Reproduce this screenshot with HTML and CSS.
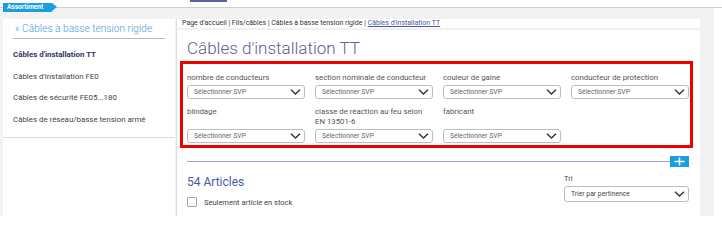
FILE: index.html
```html
<!DOCTYPE html>
<html lang="fr">
<head>
    <meta charset="UTF-8">
    <meta name="viewport" content="width=device-width, initial-scale=1.0">
    <title>Câbles d'installation TT</title>
    <link rel="stylesheet" href="styles.css">
</head>
<body>
    <header class="topbar">
        <span class="badge">Assortiment</span>
        <nav class="tabs">
            <span class="tab active"></span>
        </nav>
    </header>

    <div class="page">
        <aside class="sidebar">
            <a class="sidebar-back" href="#">« Câbles à basse tension rigide</a>
            <ul class="sidebar-nav">
                <li class="active">Câbles d'installation TT</li>
                <li>Câbles d'installation FE0</li>
                <li>Câbles de sécurité FE05...180</li>
                <li>Câbles de réseau/basse tension armé</li>
            </ul>
        </aside>

        <main class="content">
            <div class="breadcrumb">
                Page d'accueil | Fils/câbles | Câbles à basse tension rigide | <a href="#">Câbles d'installation TT</a>
            </div>

            <h1 class="title">Câbles d'installation TT</h1>

            <!-- filtres -->
            <div class="filters">
                <div class="filter">
                    <label>nombre de conducteurs</label>
                    <div class="select"><span>Sélectionner SVP</span><svg viewBox="0 0 11 6"><path d="M1 0.8 L5.5 5 L10 0.8"/></svg></div>
                </div>
                <div class="filter">
                    <label>section nominale de conducteur</label>
                    <div class="select"><span>Sélectionner SVP</span><svg viewBox="0 0 11 6"><path d="M1 0.8 L5.5 5 L10 0.8"/></svg></div>
                </div>
                <div class="filter">
                    <label>couleur de gaine</label>
                    <div class="select"><span>Sélectionner SVP</span><svg viewBox="0 0 11 6"><path d="M1 0.8 L5.5 5 L10 0.8"/></svg></div>
                </div>
                <div class="filter">
                    <label>conducteur de protection</label>
                    <div class="select"><span>Sélectionner SVP</span><svg viewBox="0 0 11 6"><path d="M1 0.8 L5.5 5 L10 0.8"/></svg></div>
                </div>
                <div class="filter">
                    <label>blindage</label>
                    <div class="select"><span>Sélectionner SVP</span><svg viewBox="0 0 11 6"><path d="M1 0.8 L5.5 5 L10 0.8"/></svg></div>
                </div>
                <div class="filter">
                    <label>classe de réaction au feu selon EN 13501-6</label>
                    <div class="select"><span>Sélectionner SVP</span><svg viewBox="0 0 11 6"><path d="M1 0.8 L5.5 5 L10 0.8"/></svg></div>
                </div>
                <div class="filter">
                    <label>fabricant</label>
                    <div class="select"><span>Sélectionner SVP</span><svg viewBox="0 0 11 6"><path d="M1 0.8 L5.5 5 L10 0.8"/></svg></div>
                </div>
            </div>

            <div class="divider">
                <span class="divider-line"></span>
                <button class="more-btn"><svg viewBox="0 0 19 11"><path d="M9.5 1.5 V9.5 M4.5 5.5 H14.5"/></svg></button>
            </div>

            <div class="results">
                <div class="results-left">
                    <h2 class="count">54 Articles</h2>
                    <label class="stock"><span class="checkbox"></span>Seulement article en stock</label>
                </div>
                <div class="sort">
                    <label>Tri</label>
                    <div class="select select-sort"><span>Trier par pertinence</span><svg viewBox="0 0 11 6"><path d="M1 0.8 L5.5 5 L10 0.8"/></svg></div>
                </div>
            </div>
        </main>
    </div>
</body>
</html>
```

FILE: styles.css
```css
body {
    margin: 0;
    font-family: Roboto, "Liberation Sans", Arial, sans-serif;
    background: #fff;
    color: #444;
}

ul {
    margin: 0;
    padding: 0;
    list-style: none;
}

a {
    color: inherit;
    text-decoration: none;
}

/* top bar */
.topbar {
    position: relative;
    height: 7px;
    border-bottom: 1px solid #cfcfcf;
    background: #fff;
}

.badge {
    position: absolute;
    left: 3px;
    top: 3px;
    height: 9px;
    width: 49px;
    padding-left: 4px;
    box-sizing: border-box;
    background: #1a9ee0;
    color: #fff;
    font-size: 6.5px;
    font-weight: bold;
    line-height: 9px;
}

.badge::after {
    content: "";
    position: absolute;
    right: -5px;
    top: 0;
    border-top: 4.5px solid transparent;
    border-bottom: 4.5px solid transparent;
    border-left: 5px solid #1a9ee0;
}

.tabs {
    display: flex;
    height: 2px;
    padding-left: 190px;
}

.tab {
    display: block;
    width: 37px;
    height: 2px;
    background: #5c60a8;
}

/* page */
.page {
    display: flex;
    gap: 1px;
    width: 714px;
    height: 208px;
    box-sizing: border-box;
    padding: 11px 14px 0 3px;
    background: #f2f2f2;
}

.sidebar {
    width: 172px;
    flex-shrink: 0;
    background: #fff;
}

.sidebar-back {
    display: block;
    margin: 0 10px;
    padding: 4px 0 3px 2px;
    border-bottom: 1px solid #b5b5b5;
    color: #4b9ad8;
    font-size: 10.2px;
    font-weight: 300;
    line-height: 12px;
}

.sidebar-nav {
    padding: 5px 0 6px 10px;
    border-bottom: 1px solid #ddd;
}

.sidebar-nav li {
    font-size: 7.9px;
    line-height: 21.7px;
    color: #444;
}

.sidebar-nav li.active {
    font-weight: bold;
    color: #2f3466;
}

.content {
    flex: 1;
    background: #fff;
    border-left: 1px solid #ddd;
    padding: 0 7px 0 3px;
}

.breadcrumb {
    margin: 0 -7px 0 -3px;
    padding: 0 0 0 5px;
    height: 9px;
    border-bottom: 2px solid #f0f0f0;
    font-size: 7px;
    line-height: 9px;
    color: #333;
}

.breadcrumb a {
    color: #4c56a0;
    text-decoration: underline;
}

.title {
    margin: 7px 0 2px 7px;
    font-size: 17px;
    font-weight: 300;
    line-height: 22px;
    color: #56628f;
}

/* filters */
.filters {
    display: grid;
    grid-template-columns: repeat(4, 118px);
    column-gap: 10px;
    row-gap: 8px;
    padding: 9px 1px 2px 4px;
    border: 3px solid #ee0000;
}

.filter {
    display: flex;
    flex-direction: column;
}

.filter label {
    margin-bottom: 2px;
    font-size: 7.8px;
    line-height: 10px;
    color: #555;
}

.select {
    margin-top: auto;
    display: flex;
    align-items: center;
    justify-content: space-between;
    height: 14px;
    box-sizing: border-box;
    padding: 0 3px 0 6px;
    border: 1px solid #bdbdbd;
    border-radius: 3px;
    background: #fff;
    font-size: 6.8px;
    color: #666;
}

.select svg {
    width: 11px;
    height: 6px;
    fill: none;
    stroke: #333;
    stroke-width: 1.4;
}

.divider {
    display: flex;
    align-items: center;
    width: 502px;
    margin: 8px 0 0 7px;
}

.divider-line {
    flex: 1;
    height: 1px;
    background: #9ea3cc;
}

.more-btn {
    width: 19px;
    height: 11px;
    padding: 0;
    border: none;
    background: #1a9ee0;
}

.more-btn svg {
    display: block;
    width: 19px;
    height: 11px;
    fill: none;
    stroke: #fff;
    stroke-width: 1.5;
}

/* results */
.results {
    display: flex;
    justify-content: space-between;
    width: 502px;
    margin: 7px 0 0 7px;
}

.count {
    margin: 0;
    font-size: 12px;
    font-weight: normal;
    line-height: 16px;
    color: #4a5aa6;
}

.stock {
    display: flex;
    align-items: center;
    gap: 7px;
    margin-top: 7px;
    font-size: 7.5px;
    color: #444;
}

.checkbox {
    width: 10px;
    height: 10px;
    box-sizing: border-box;
    border: 1px solid #aaa;
    border-radius: 1px;
}

.sort {
    width: 125px;
}

.sort label {
    display: block;
    margin-bottom: 2px;
    font-size: 7.5px;
    line-height: 10px;
    color: #444;
}

.select-sort {
    height: 16px;
    color: #444;
}
```
